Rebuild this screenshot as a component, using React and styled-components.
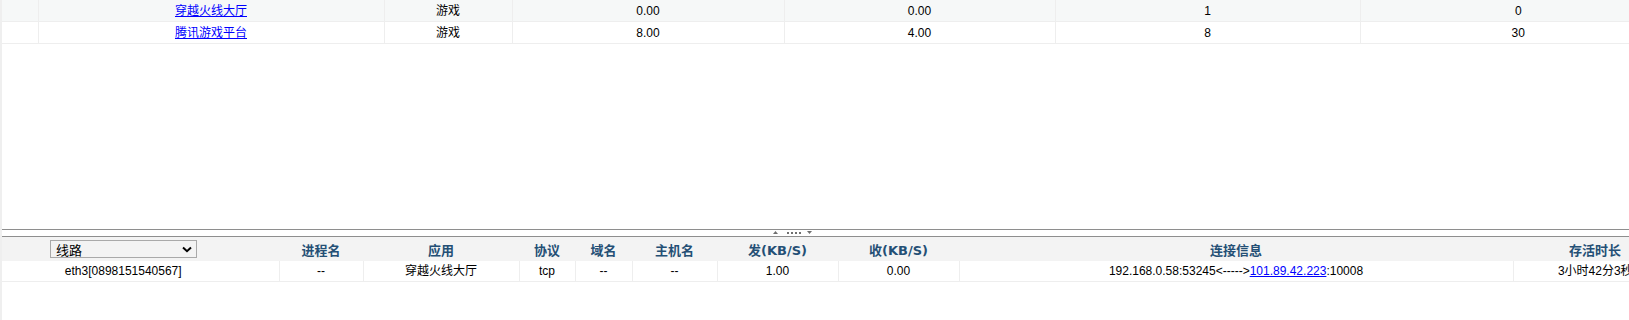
import React from 'react'
import styled, { createGlobalStyle } from 'styled-components'

const GlobalStyle = createGlobalStyle`
  html, body {
    margin: 0;
    padding: 0;
    background: #fff;
    overflow: hidden;
  }
  body {
    font-family: "Liberation Sans", "Noto Sans CJK SC", sans-serif;
    font-size: 12px;
    color: #000;
  }
`

const appRows = [
  { name: '穿越火线大厅', type: '游戏', up: '0.00', down: '0.00', conns: '1', total: '0' },
  { name: '腾讯游戏平台', type: '游戏', up: '8.00', down: '4.00', conns: '8', total: '30' },
]

const topCols = [36, 346, 128, 272, 271, 305, 316]
const bottomCols = [277, 84, 156, 56, 57, 85, 121, 121, 554, 164]

const Page = styled.div`
  width: 1629px;
  height: 320px;
  box-sizing: border-box;
  border-left: 2px solid #efefef;
  overflow: hidden;
  display: flex;
  flex-direction: column;
`

const TopPanel = styled.div`
  height: 229px;
  overflow: hidden;
`

const Grid = styled.table`
  table-layout: fixed;
  border-collapse: collapse;
  width: ${p => p.$width}px;
`

const AppRow = styled.tr`
  background: ${p => (p.$striped ? '#f6f8f8' : '#fff')};

  td {
    padding-top: 1px;
  }

  &:first-child td {
    height: 20px;
  }
`

const Cell = styled.td`
  height: 20px;
  padding: 0;
  text-align: center;
  vertical-align: middle;
  border-bottom: 1px solid #eeeeee;
  border-left: 1px solid #eeeeee;
  white-space: nowrap;
  overflow: hidden;
  line-height: 14px;

  &:first-child {
    border-left: none;
    padding-right: ${p => p.$padRight || 0}px;
  }
`

const Link = styled.a`
  color: #0000ff;
  text-decoration: underline;
  cursor: pointer;
`

const Splitter = styled.div`
  height: 6px;
  border-top: 1px solid #8e8e8e;
  border-bottom: 1px solid #8e8e8e;
  margin-left: -2px;
  padding-left: 773px;
  display: flex;
  align-items: flex-start;
`

const BottomPanel = styled.div`
  flex: 1;
  overflow: hidden;
`

const HeadRow = styled.tr`
  background: #f3f3f3;
`

const HeadCell = styled.th`
  height: 24px;
  padding: 0;
  text-align: center;
  vertical-align: middle;
  font-family: "DejaVu Sans", "Noto Sans CJK SC", sans-serif;
  font-size: 13px;
  font-weight: bold;
  color: #244f75;
  white-space: nowrap;
  overflow: hidden;

  &:first-child {
    padding-right: 34px;
  }
`

const FakeSelect = styled.div`
  width: 147px;
  height: 18px;
  box-sizing: border-box;
  margin: 0 auto;
  border: 1px solid #a9a9a9;
  display: flex;
  align-items: center;
  justify-content: space-between;
  padding: 0 4px 0 5px;
  font-family: "Noto Sans CJK SC", sans-serif;
  font-size: 13px;
  font-weight: normal;
  color: #000;
`

const Chevron = () => (
  <svg width="10" height="7" viewBox="0 0 10 7">
    <path d="M1 1.5 L5 5.2 L9 1.5" fill="none" stroke="#000" strokeWidth="2" />
  </svg>
)

const Handle = () => (
  <svg width="40" height="6" viewBox="0 0 40 6">
    <polygon points="0,4 2.5,1 5,4" fill="#6f6f6f" />
    <rect x="14" y="2" width="2" height="2" fill="#6f6f6f" />
    <rect x="18" y="2" width="2" height="2" fill="#6f6f6f" />
    <rect x="22" y="2" width="2" height="2" fill="#6f6f6f" />
    <rect x="26" y="2" width="2" height="2" fill="#6f6f6f" />
    <polygon points="34,1 39,1 36.5,4" fill="#6f6f6f" />
  </svg>
)

const headers = ['进程名', '应用', '协议', '域名', '主机名', '发(KB/S)', '收(KB/S)', '连接信息', '存活时长']

const App = () => {
  return (
    <>
      <GlobalStyle />
      <Page>
        <TopPanel>
          <Grid $width={1674}>
            <colgroup>
              {topCols.map((w, i) => <col key={i} style={{ width: w }} />)}
            </colgroup>
            <tbody>
              {appRows.map((r, i) => (
                <AppRow key={r.name} $striped={i % 2 === 0}>
                  <Cell />
                  <Cell><Link>{r.name}</Link></Cell>
                  <Cell>{r.type}</Cell>
                  <Cell>{r.up}</Cell>
                  <Cell>{r.down}</Cell>
                  <Cell>{r.conns}</Cell>
                  <Cell>{r.total}</Cell>
                </AppRow>
              ))}
            </tbody>
          </Grid>
        </TopPanel>
        <Splitter>
          <Handle />
        </Splitter>
        <BottomPanel>
          <Grid $width={1675}>
            <colgroup>
              {bottomCols.map((w, i) => <col key={i} style={{ width: w }} />)}
            </colgroup>
            <thead>
              <HeadRow>
                <HeadCell>
                  <FakeSelect>
                    <span>线路</span>
                    <Chevron />
                  </FakeSelect>
                </HeadCell>
                {headers.map(h => <HeadCell key={h}>{h}</HeadCell>)}
              </HeadRow>
            </thead>
            <tbody>
              <tr>
                <Cell $padRight={34}>eth3[0898151540567]</Cell>
                <Cell>--</Cell>
                <Cell>穿越火线大厅</Cell>
                <Cell>tcp</Cell>
                <Cell>--</Cell>
                <Cell>--</Cell>
                <Cell>1.00</Cell>
                <Cell>0.00</Cell>
                <Cell>
                  192.168.0.58:53245&lt;-----&gt;<Link>101.89.42.223</Link>:10008
                </Cell>
                <Cell>3小时42分3秒</Cell>
              </tr>
            </tbody>
          </Grid>
        </BottomPanel>
      </Page>
    </>
  )
}

export default App
